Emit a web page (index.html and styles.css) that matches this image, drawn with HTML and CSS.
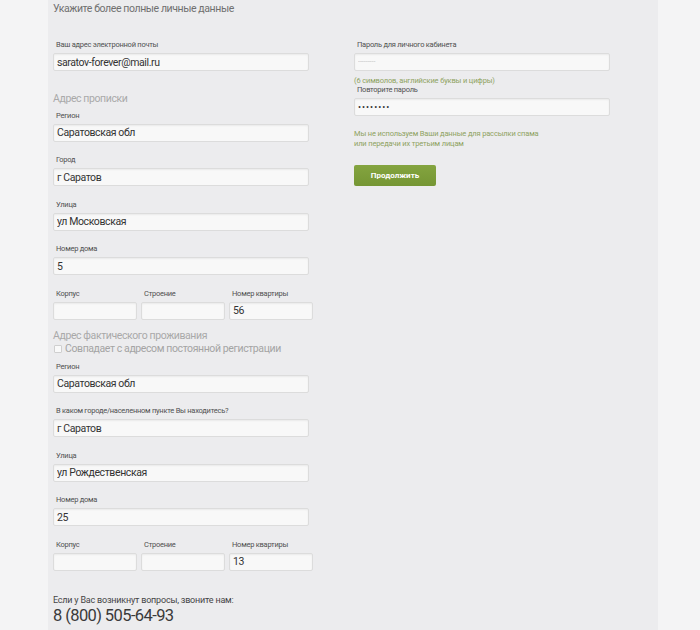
FILE: index.html
```html
<!DOCTYPE html>
<html lang="ru">
<head>
    <meta charset="UTF-8">
    <meta name="viewport" content="width=device-width, initial-scale=1.0">
    <title>Личные данные</title>
    <link rel="stylesheet" href="styles.css">
</head>
<body>
    <div class="panel">
        <h2 class="page-title">Укажите более полные личные данные</h2>
        <form class="columns">
            <div class="col-left">
                <div class="field">
                    <label>Ваш адрес электронной почты</label>
                    <input type="text" value="saratov-forever@mail.ru">
                </div>

                <h3 class="section-title">Адрес прописки</h3>
                <div class="field">
                    <label>Регион</label>
                    <input type="text" value="Саратовская обл">
                </div>
                <div class="field">
                    <label>Город</label>
                    <input type="text" value="г Саратов">
                </div>
                <div class="field">
                    <label>Улица</label>
                    <input type="text" value="ул Московская">
                </div>
                <div class="field">
                    <label>Номер дома</label>
                    <input type="text" value="5">
                </div>
                <div class="field-row">
                    <div class="field">
                        <label>Корпус</label>
                        <input type="text">
                    </div>
                    <div class="field">
                        <label>Строение</label>
                        <input type="text">
                    </div>
                    <div class="field">
                        <label>Номер квартиры</label>
                        <input type="text" value="56">
                    </div>
                </div>

                <h3 class="section-title section-title-second">Адрес фактического проживания</h3>
                <label class="same-address"><span class="checkbox"></span>Совпадает с адресом постоянной регистрации</label>
                <div class="field">
                    <label>Регион</label>
                    <input type="text" value="Саратовская обл">
                </div>
                <div class="field">
                    <label>В каком городе/населенном пункте Вы находитесь?</label>
                    <input type="text" value="г Саратов">
                </div>
                <div class="field">
                    <label>Улица</label>
                    <input type="text" value="ул Рождественская">
                </div>
                <div class="field">
                    <label>Номер дома</label>
                    <input type="text" value="25">
                </div>
                <div class="field-row">
                    <div class="field">
                        <label>Корпус</label>
                        <input type="text">
                    </div>
                    <div class="field">
                        <label>Строение</label>
                        <input type="text">
                    </div>
                    <div class="field">
                        <label>Номер квартиры</label>
                        <input type="text" value="13">
                    </div>
                </div>

                <div class="contacts">
                    <p>Если у Вас возникнут вопросы, звоните нам:</p>
                    <div class="phone">8 (800) 505-64-93</div>
                </div>
            </div>

            <div class="col-right">
                <div class="field">
                    <label>Пароль для личного кабинета</label>
                    <input type="text" class="placeholder" value="---------">
                </div>
                <p class="hint">(6 символов, английские буквы и цифры)</p>
                <div class="field">
                    <label>Повторите пароль</label>
                    <input type="password" value="12345678">
                </div>
                <p class="note">Мы не используем Ваши данные для рассылки спама<br>или передачи их третьим лицам</p>
                <button type="button">Продолжить</button>
            </div>
        </form>
    </div>
</body>
</html>
```

FILE: styles.css
```css
body {
    margin: 0;
    background-color: #f4f4f5;
    font-family: Roboto, "Open Sans", sans-serif;
    color: #444;
}

.panel {
    width: 610px;
    min-height: 630px;
    margin-left: 48px;
    padding: 2px 0 0 5px;
    box-sizing: border-box;
    background-color: #ececee;
}

.page-title {
    margin: 0;
    font-size: 10.5px;
    line-height: 14px;
    letter-spacing: -0.4px;
    font-weight: normal;
    color: #707070;
}

.columns {
    display: flex;
    margin-top: 23px;
}

.col-left {
    width: 260px;
}

.col-right {
    width: 256px;
    margin-left: 41px;
}

.field {
    margin-bottom: 12.5px;
}

.field label {
    display: block;
    padding-left: 3px;
    margin-bottom: 3px;
    font-size: 7.5px;
    line-height: 11px;
    letter-spacing: -0.25px;
    color: #505050;
}

.field input {
    display: block;
    width: 256px;
    height: 18px;
    box-sizing: border-box;
    padding: 0 3px;
    border: 1px solid #dcdcdc;
    border-radius: 2px;
    background-color: #f8f8f8;
    box-shadow: inset 0 1px 2px rgba(0, 0, 0, 0.06);
    font-family: Roboto, "Open Sans", sans-serif;
    font-size: 10.5px;
    letter-spacing: -0.4px;
    color: #333;
    outline: none;
}

.field input.placeholder {
    color: #c4c4c4;
    font-size: 7px;
    letter-spacing: 0;
}

.field input[type="password"] {
    font-size: 9px;
    letter-spacing: 1px;
}

.field-row {
    display: flex;
    gap: 4px;
    margin-bottom: 9.5px;
}

.field-row .field {
    margin-bottom: 0;
}

.field-row .field input {
    width: 84px;
}

.section-title {
    margin: 21px 0 3.5px;
    font-size: 10.5px;
    line-height: 14px;
    letter-spacing: -0.4px;
    font-weight: normal;
    color: #a9a9a9;
}

.section-title-second {
    margin-top: 0;
    margin-bottom: 0;
}

.same-address {
    display: flex;
    align-items: center;
    margin-bottom: 5.5px;
    font-size: 10.5px;
    line-height: 12px;
    letter-spacing: -0.4px;
    color: #a4a4a4;
}

.checkbox {
    width: 6px;
    height: 6px;
    margin: 0 3px 0 1px;
    border: 1px solid #cfcfcf;
    border-radius: 1px;
    background-color: #f9f9f9;
}

.contacts {
    margin-top: 23.5px;
}

.contacts p {
    margin: 0;
    font-size: 9px;
    line-height: 12px;
    letter-spacing: -0.2px;
    color: #454545;
}

.phone {
    font-size: 16.5px;
    line-height: 19px;
    letter-spacing: -0.6px;
    color: #3a3a3a;
}

.hint {
    margin: -7.5px 0 -2px;
    font-size: 7.5px;
    line-height: 10px;
    letter-spacing: -0.15px;
    color: #8ea25f;
}

.note {
    margin: 0 0 14px;
    font-size: 7.5px;
    line-height: 10px;
    letter-spacing: -0.15px;
    color: #8ea25f;
}

button {
    width: 82px;
    height: 21px;
    padding: 0;
    border: none;
    border-radius: 2px;
    background: linear-gradient(#84a43f, #759634);
    color: #ffffff;
    font-family: Roboto, "Open Sans", sans-serif;
    font-size: 8px;
    font-weight: bold;
    cursor: pointer;
}
```
